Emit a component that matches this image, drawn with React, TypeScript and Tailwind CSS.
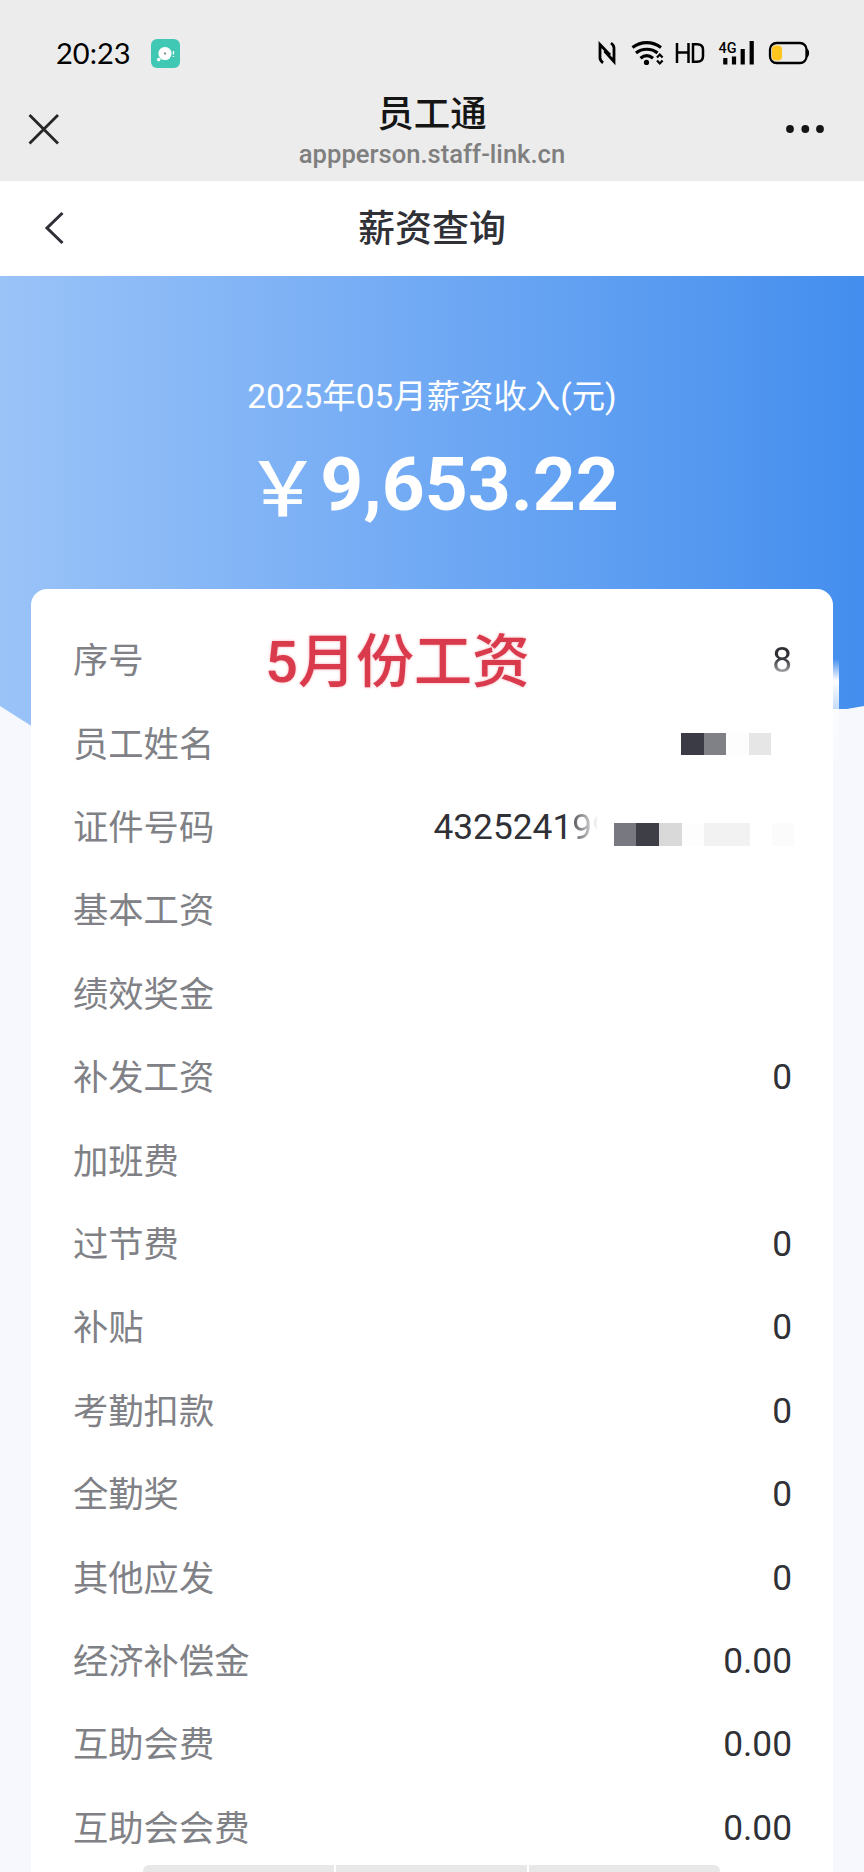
import { clsx } from 'clsx';

type Row = {
  label: string;
  value?: string;
};

const ROWS: Row[] = [
  { label: '序号', value: '8' },
  { label: '员工姓名' },
  { label: '证件号码', value: '4325241' },
  { label: '基本工资' },
  { label: '绩效奖金' },
  { label: '补发工资', value: '0' },
  { label: '加班费' },
  { label: '过节费', value: '0' },
  { label: '补贴', value: '0' },
  { label: '考勤扣款', value: '0' },
  { label: '全勤奖', value: '0' },
  { label: '其他应发', value: '0' },
  { label: '经济补偿金', value: '0.00' },
  { label: '互助会费', value: '0.00' },
  { label: '互助会会费', value: '0.00' },
];

function StatusBar() {
  return (
    <div className="flex h-[74px] items-end justify-between pr-[54px] pl-[56px]">
      <div className="flex items-end">
        <span className="mb-[7px] w-[75px] font-['Lato'] text-[29px] leading-[29px] text-black">20:23</span>
        <svg className="mb-[6px] ml-5 h-[29px] w-[29px]" viewBox="0 0 29 29">
          <rect width="29" height="29" rx="6" fill="#41c8b4" />
          <circle cx="14" cy="14.5" r="6.6" fill="#fff" />
          <circle cx="7.7" cy="20.6" r="1.8" fill="#fff" />
          <circle cx="14" cy="14.5" r="1.2" fill="#8b9d9b" />
          <path d="M22.5 12v3.5M22.5 17v1" stroke="#fff" strokeWidth="1.3" />
        </svg>
      </div>
      <svg className="-mb-[6px] h-[50px] w-[212px]" viewBox="598 30 212 50" fill="none" stroke="#000">
        {/* nfc */}
        <path d="M603 62.800c-2-1.500-3-3-3-5V44.500l10 10.500" strokeWidth="2.800" />
        <path d="M611 43c2 1.500 3 3 3 5v13.500L604.500 51" strokeWidth="2.800" />
        {/* wifi */}
        <path d="M632.500 47.500c8.500-6.500 20-6.500 28.500 0" strokeWidth="3.200" />
        <path d="M636 53c6-5 15.500-5 21.500 0" strokeWidth="3.200" />
        <path d="M640.500 58.300c4-3.400 8.500-3.400 12.500 0" strokeWidth="3.200" />
        <circle cx="646.500" cy="62.400" r="2.600" fill="#000" stroke="none" />
        <path d="M657 57.500l2.800-3 2.800 3M657 60.500l2.800 3 2.800-3" strokeWidth="2.200" />
        {/* HD */}
        <path d="M677 43v20M688.500 43v20M677 52.500h11.500" strokeWidth="2.500" />
        <path d="M693 44.200h4c4.500 0 6 2.500 6 5.500v6.500c0 3-1.500 5.500-6 5.500h-4z" strokeWidth="2.500" />
        {/* 4G signal */}
        <text x="718.500" y="52.500" fill="#000" stroke="none" className="font-['Roboto'] text-[15px] font-medium" textLength="18" lengthAdjust="spacingAndGlyphs">
          4G
        </text>
        <path d="M725.300 58v6.500M734 56.500v8M742.700 49v15.500M751.700 41v23.500" strokeWidth="4.200" />
        {/* battery */}
        <rect x="770" y="43" width="36.500" height="20" rx="6.500" strokeWidth="2.300" />
        <rect x="772" y="45.500" width="10" height="15" rx="4" fill="#fdc51d" stroke="none" />
        <path d="M807 48.500c2.800 1.500 2.800 7.500 0 9z" fill="#000" stroke="none" />
      </svg>
    </div>
  );
}

function BrowserBar() {
  return (
    <div className="flex h-[107px] items-center justify-between pt-[2px] pr-[40px] pl-[28px]">
      <svg className="h-8 w-8" viewBox="0 0 32 32" fill="none" stroke="#262626" strokeWidth="2.8">
        <path d="M1.500 2L30 30.500M30 2L1.500 30.500" />
      </svg>
      <div className="flex flex-col items-center pt-[9px] pl-[18px]">
        <h1 className="text-[36.5px] leading-[42px] font-medium text-[#151515]">员工通</h1>
        <p className="text-[25.6px] leading-[36px] font-medium text-[#7f7f7f]">appperson.staff-link.cn</p>
      </div>
      <svg className="h-8 w-[38px]" viewBox="0 0 38 32" fill="#151515">
        <circle cx="4" cy="16" r="3.9" />
        <circle cx="19.300" cy="16" r="3.9" />
        <circle cx="34" cy="16" r="3.9" />
      </svg>
    </div>
  );
}

function PageHeader() {
  return (
    <header className="relative flex h-[95px] items-center justify-center bg-white pt-[2px]">
      <svg className="absolute top-[31px] left-[44px] h-8 w-5" viewBox="0 0 20 32" fill="none" stroke="#303137" strokeWidth="3">
        <path d="M18.500 1L3 16l15.500 15" />
      </svg>
      <h2 className="text-[37px] leading-[40px] font-medium text-[#303137]">薪资查询</h2>
    </header>
  );
}

function NameMosaic() {
  return (
    <div className="mr-[21px] flex h-[22px]">
      <span className="w-[23px] bg-[#3a3b44]" />
      <span className="w-[22px] bg-[#808187]" />
      <span className="w-[23px] bg-[#fdfdfd]" />
      <span className="w-[22px] bg-[#e6e6e6]" />
    </div>
  );
}

function IdMosaic() {
  return (
    <div className="mt-[14px] -mr-[2px] ml-[2px] flex h-[23px]">
      <span className="w-[22px] bg-[#787980]" />
      <span className="w-[23px] bg-[#3d3e46]" />
      <span className="w-[23px] bg-[#d9d9d9]" />
      <span className="w-[22px] bg-[#fdfdfd]" />
      <span className="w-[46px] bg-[#f2f2f2]" />
      <span className="w-[22px] bg-white" />
      <span className="w-[22px] bg-[#fbfbfb]" />
    </div>
  );
}

function RowValue({ row }: { row: Row }) {
  if (row.label === '员工姓名') return <NameMosaic />;
  if (row.label === '证件号码') {
    return (
      <div className="flex items-center">
        <span>{row.value}</span>
        <span className="bg-gradient-to-r from-[#55555b] to-white to-65% bg-clip-text text-transparent">99</span>
        <IdMosaic />
      </div>
    );
  }
  return (
    <span
      className={clsx(
        row.label === '序号' && 'bg-gradient-to-b from-[#303137] from-45% to-[#e4e4e4] to-85% bg-clip-text text-transparent',
      )}
    >
      {row.value}
    </span>
  );
}

export default function App() {
  return (
    <div className="relative flex h-[1872px] w-[864px] flex-col overflow-hidden bg-[#f6f8fd] font-['Roboto','Noto_Sans_CJK_SC',sans-serif]">
      <div className="bg-[#ececec]">
        <StatusBar />
        <BrowserBar />
      </div>
      <PageHeader />
      <section className="h-[313px] shrink-0">
        <div className="flex h-[474px] flex-col items-center bg-gradient-to-r from-[#9ac3f8] to-[#438eee] pt-[99px] text-white [clip-path:polygon(0_0,100%_0,100%_430px,98%_433px,92%_433px,92%_474px,8%_474px,0_430px)]">
          <p className="text-[33.4px] leading-[44px]">2025年05月薪资收入(元)</p>
          <p className="mt-[20px] flex text-[75px] leading-[90px] font-bold">
            <span className="font-['Noto_Sans_CJK_SC'] font-medium">{'\uFFE5'}</span>
            <span>9,653.22</span>
          </p>
        </div>
      </section>
      <main className="relative mx-[31px] grow rounded-t-[16px] bg-white pt-[30px]">
        {/* soft patch over the card's right edge */}
        <div className="absolute top-[70px] -right-[6px] h-[110px] w-[7px] bg-gradient-to-b from-transparent via-white via-20% to-transparent" />
        {ROWS.map((row) => (
          <div key={row.label} className="flex h-[83.4px] items-center justify-between pr-[41px] pl-[42px] text-[35.3px] text-[#303137]">
            <span className="pt-[2px] text-[#808186]">{row.label}</span>
            <RowValue row={row} />
          </div>
        ))}
        <p className="absolute top-[33px] left-[234px] text-[58px] leading-[80px] font-medium whitespace-nowrap text-[#d93a4c] [text-shadow:0_0_3px_#f3a9b1]">
          5月份工资
        </p>
      </main>
      <div className="absolute bottom-0 left-[143px] flex h-[7px] w-[577px] gap-[2px] overflow-hidden rounded-t-md">
        <span className="flex-1 bg-[#e8e8e8]" />
        <span className="flex-1 bg-[#e8e8e8]" />
        <span className="flex-1 bg-[#e8e8e8]" />
      </div>
    </div>
  );
}
